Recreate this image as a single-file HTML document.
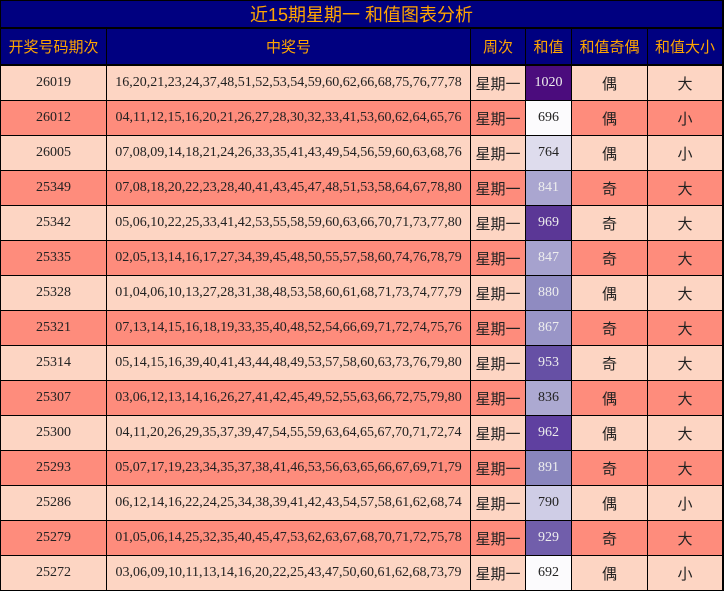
<!DOCTYPE html>
<html><head><meta charset="utf-8"><style>
body{margin:0;width:724px;height:591px;background:#000;overflow:hidden;position:relative;font-family:"Liberation Serif","Noto Sans CJK SC",serif;}
.c{position:absolute;display:flex;align-items:center;justify-content:center;font-size:14px;color:#222;}
.t{left:1px;top:1px;width:721px;height:26px;background:#000080;color:#ffa500;font-family:"Liberation Sans","Noto Sans CJK SC",sans-serif;font-size:18px;}
.h{background:#000080;color:#ffa500;font-family:"Liberation Sans","Noto Sans CJK SC",sans-serif;font-size:15px;top:29px;height:35px;}
.z{font-family:"Liberation Sans","Noto Sans CJK SC",sans-serif;font-size:15px;}
.L{background:#fdd5c3}.D{background:#fe8c7c}
.w{color:#eee}
</style></head><body>
<div class="c t">近15期星期一 和值图表分析</div>
<div class="c h" style="left:1px;width:105px">开奖号码期次</div>
<div class="c h" style="left:107px;width:363px">中奖号</div>
<div class="c h" style="left:471px;width:54px">周次</div>
<div class="c h" style="left:526px;width:45px">和值</div>
<div class="c h" style="left:572px;width:75px">和值奇偶</div>
<div class="c h" style="left:648px;width:74px">和值大小</div>
<div id="rows"></div>
<script>
var d=[["26019","16,20,21,23,24,37,48,51,52,53,54,59,60,62,66,68,75,76,77,78","1020","偶","大","#4b0c7d",1],
["26012","04,11,12,15,16,20,21,26,27,28,30,32,33,41,53,60,62,64,65,76","696","偶","小","#fcfbfd",0],
["26005","07,08,09,14,18,21,24,26,33,35,41,43,49,54,56,59,60,63,68,76","764","偶","小","#dedced",0],
["25349","07,08,18,20,22,23,28,40,41,43,45,47,48,51,53,58,64,67,78,80","841","奇","大","#aaa6d0",1],
["25342","05,06,10,22,25,33,41,42,53,55,58,59,60,63,66,70,71,73,77,80","969","奇","大","#5b3796",1],
["25335","02,05,13,14,16,17,27,34,39,45,48,50,55,57,58,60,74,76,78,79","847","奇","大","#a6a2ce",1],
["25328","01,04,06,10,13,27,28,31,38,48,53,58,60,61,68,71,73,74,77,79","880","偶","大","#8f8bc1",1],
["25321","07,13,14,15,16,18,19,33,35,40,48,52,54,66,69,71,72,74,75,76","867","奇","大","#9995c7",1],
["25314","05,14,15,16,39,40,41,43,44,48,49,53,57,58,60,63,73,76,79,80","953","奇","大","#6650a5",1],
["25307","03,06,12,13,14,16,26,27,41,42,45,49,52,55,63,66,72,75,79,80","836","偶","大","#aca9d1",0],
["25300","04,11,20,26,29,35,37,39,47,54,55,59,63,64,65,67,70,71,72,74","962","偶","大","#5f40a0",1],
["25293","05,07,17,19,23,34,35,37,38,41,46,53,56,63,65,66,67,69,71,79","891","奇","大","#8985bd",1],
["25286","06,12,14,16,22,24,25,34,38,39,41,42,43,54,57,58,61,62,68,74","790","偶","小","#cfcde6",0],
["25279","01,05,06,14,25,32,35,40,45,47,53,62,63,67,68,70,71,72,75,78","929","奇","大","#715eab",1],
["25272","03,06,09,10,11,13,14,16,20,22,25,43,47,50,60,61,62,68,73,79","692","偶","小","#fcfbfd",0]];
var h="";d.forEach(function(r,i){var y=66+35*i,k=i%2?"D":"L",s='top:'+y+'px;height:34px;';
h+='<div class="c '+k+'" style="'+s+'left:1px;width:105px">'+r[0]+'</div>';
h+='<div class="c '+k+'" style="'+s+'left:107px;width:363px">'+r[1]+'</div>';
h+='<div class="c z '+k+'" style="'+s+'left:471px;width:54px">星期一</div>';
h+='<div class="c'+(r[6]?' w':'')+'" style="'+s+'left:526px;width:45px;background:'+r[5]+'">'+r[2]+'</div>';
h+='<div class="c z '+k+'" style="'+s+'left:572px;width:75px">'+r[3]+'</div>';
h+='<div class="c z '+k+'" style="'+s+'left:648px;width:74px">'+r[4]+'</div>';});
document.getElementById("rows").innerHTML=h;
</script>
</body></html>
